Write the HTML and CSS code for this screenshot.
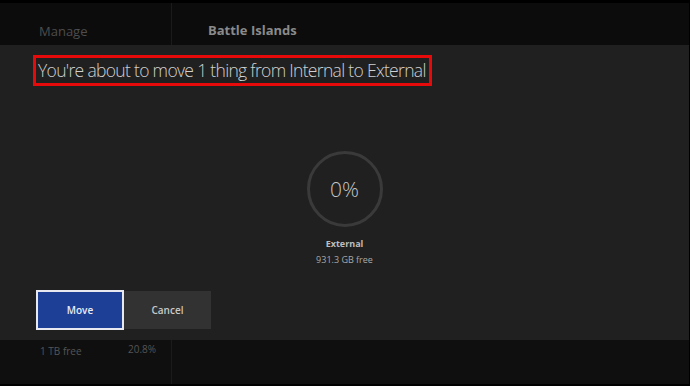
FILE: index.html
```html
<!DOCTYPE html>
<html lang="en">
<head>
  <meta charset="UTF-8" />
  <meta name="viewport" content="width=device-width, initial-scale=1.0"/>
  <title>Manage - Battle Islands</title>
  <link rel="stylesheet" href="styles.css">
</head>
<body>
  <div class="screen">
    <header class="topbar">
      <div class="side-col">Manage</div>
      <div class="main-col">Battle Islands</div>
    </header>

    <section class="dialog">
      <h1 class="dialog-title">You're about to move 1 thing from Internal to External</h1>

      <div class="progress">
        <div class="ring">0%</div>
        <div class="target-name">External</div>
        <div class="target-free">931.3 GB free</div>
      </div>

      <div class="actions">
        <button class="btn btn-move">Move</button>
        <button class="btn btn-cancel">Cancel</button>
      </div>
    </section>

    <footer class="behind">
      <div class="side-col">
        <span class="storage-free">1 TB free</span>
        <span class="storage-pct">20.8%</span>
      </div>
      <div class="main-col"></div>
    </footer>
  </div>
</body>
</html>
```

FILE: styles.css
```css
:root {
  --bg-color: #0d0d0d;
  --panel-bg: #202020;
  --divider: #1b1b1b;
  --text-color: #cfcfcf;
  --muted: #555;
  --accent-red: #e60a0a;
  --move-bg: #1d3f96;
  --cancel-bg: #323232;
}

body {
  margin: 0;
  background-color: #000;
  font-family: 'Open Sans', 'Noto Sans', sans-serif;
  color: var(--text-color);
}

.screen {
  width: 690px;
  height: 386px;
  display: flex;
  flex-direction: column;
  overflow: hidden;
}

.topbar {
  height: 42px;
  margin-top: 3px;
  margin-right: 1px;
  background-color: #0c0c0c;
  display: flex;
}

.side-col {
  width: 172px;
  border-right: 1px solid var(--divider);
  box-sizing: border-box;
}

.main-col {
  flex: 1;
}

.topbar .side-col {
  padding: 19px 0 0 39px;
  font-size: 13px;
  color: #4d4d4d;
}

.topbar .main-col {
  padding: 18px 0 0 36px;
  font-size: 13px;
  font-weight: 700;
  color: #8a8a8a;
}

.dialog {
  height: 295px;
  margin-right: 1px;
  background-color: var(--panel-bg);
  display: flex;
  flex-direction: column;
  box-sizing: border-box;
  padding-top: 10px;
}

.dialog-title {
  align-self: flex-start;
  margin: 0 0 0 33px;
  padding: 1px 3px 1px 2px;
  border: 3px solid var(--accent-red);
  font-size: 17.5px;
  font-weight: 300;
  line-height: 23px;
  letter-spacing: -0.68px;
  color: #d0d0d0;
  white-space: nowrap;
}

.progress {
  display: flex;
  flex-direction: column;
  align-items: center;
  margin-top: 65px;
}

.ring {
  width: 70px;
  height: 70px;
  border: 3px solid #3a3a3a;
  border-radius: 50%;
  display: flex;
  align-items: center;
  justify-content: center;
  font-size: 21px;
  font-weight: 300;
  color: #c4c4c4;
}

.target-name {
  margin-top: 10px;
  font-size: 9px;
  font-weight: 700;
  color: #bdbdbd;
}

.target-free {
  margin-top: 3px;
  font-size: 9px;
  color: #a8a8a8;
}

.actions {
  display: flex;
  align-items: center;
  margin: 24px 0 0 36px;
}

.btn {
  height: 38px;
  border: none;
  font-family: inherit;
  font-size: 10px;
  font-weight: 600;
  cursor: pointer;
}

.btn-move {
  width: 88px;
  height: 40px;
  background-color: var(--move-bg);
  border: 2px solid #e8e8f0;
  color: #e8ecf8;
}

.btn-cancel {
  width: 87px;
  background-color: var(--cancel-bg);
  color: #c8c8c8;
}

.behind {
  height: 44px;
  margin-right: 1px;
  margin-bottom: 2px;
  background-color: #0f0f0f;
  display: flex;
}

.behind .side-col {
  position: relative;
  color: var(--muted);
  font-size: 10px;
}

.storage-free {
  position: absolute;
  left: 40px;
  top: 4px;
}

.storage-pct {
  position: absolute;
  left: 128px;
  top: 2px;
}
```
